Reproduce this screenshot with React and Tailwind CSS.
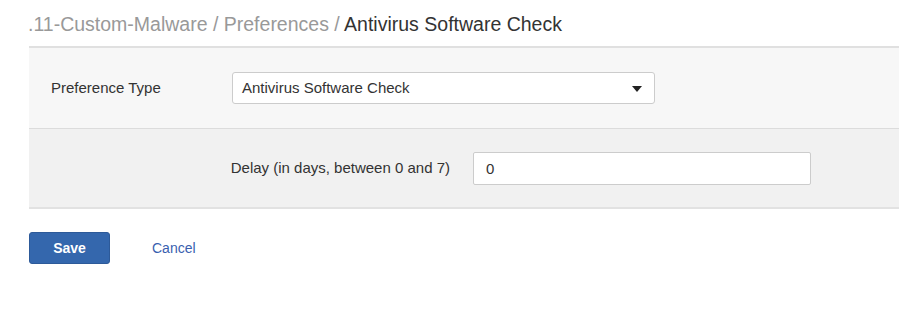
import { useState } from 'react';

const App = () => {
  const [delay, setDelay] = useState('0');

  return (
    <div className="w-[899px] h-[321px] bg-white overflow-hidden" style={{ fontFamily: '"Liberation Sans", Arial, sans-serif' }}>
      <div className="h-[46px] pl-[28px] pt-[12px] text-[19.5px] leading-[24px]">
        <span className="text-[#999]">.11-Custom-Malware / Preferences / </span>
        <span className="text-[#333]">Antivirus Software Check</span>
      </div>

      <div className="ml-[29px] border-t-2 border-[#e0e0e0]">
        <div className="h-[81px] bg-[#f7f7f7] flex items-center pl-[22px] border-b border-[#dcdcdc]">
          <label className="w-[181px] text-[15px] text-[#333]">Preference Type</label>
          <div className="relative w-[423px] h-[32px] bg-white border border-[#ccc] rounded-[3px] flex items-center pl-[9px] text-[15px] text-[#333]">
            Antivirus Software Check
            <svg className="absolute right-[12px] top-[13px]" width="10" height="6" viewBox="0 0 10 6">
              <path d="M0 0 L10 0 L5 6 Z" fill="#222" />
            </svg>
          </div>
        </div>

        <div className="h-[80px] bg-[#f1f1f1] flex items-center border-b-2 border-[#e2e2e2]">
          <label className="w-[421px] text-right text-[15px] text-[#333]">
            Delay (in days, between 0 and 7)
          </label>
          <input
            value={delay}
            onChange={(e) => setDelay(e.target.value)}
            className="ml-[23px] w-[338px] h-[33px] bg-white border border-[#ccc] rounded-[2px] pl-[12px] text-[15px] text-[#333] outline-none"
          />
        </div>
      </div>

      <div className="flex items-center ml-[29px] mt-[23px]">
        <button className="w-[81px] h-[32px] bg-[#3467ad] border border-[#2d5a99] rounded-[3px] text-white text-[14px] font-bold">
          Save
        </button>
        <button className="ml-[42px] text-[14px] text-[#3a5faf]">Cancel</button>
      </div>
    </div>
  );
};

export default App;
